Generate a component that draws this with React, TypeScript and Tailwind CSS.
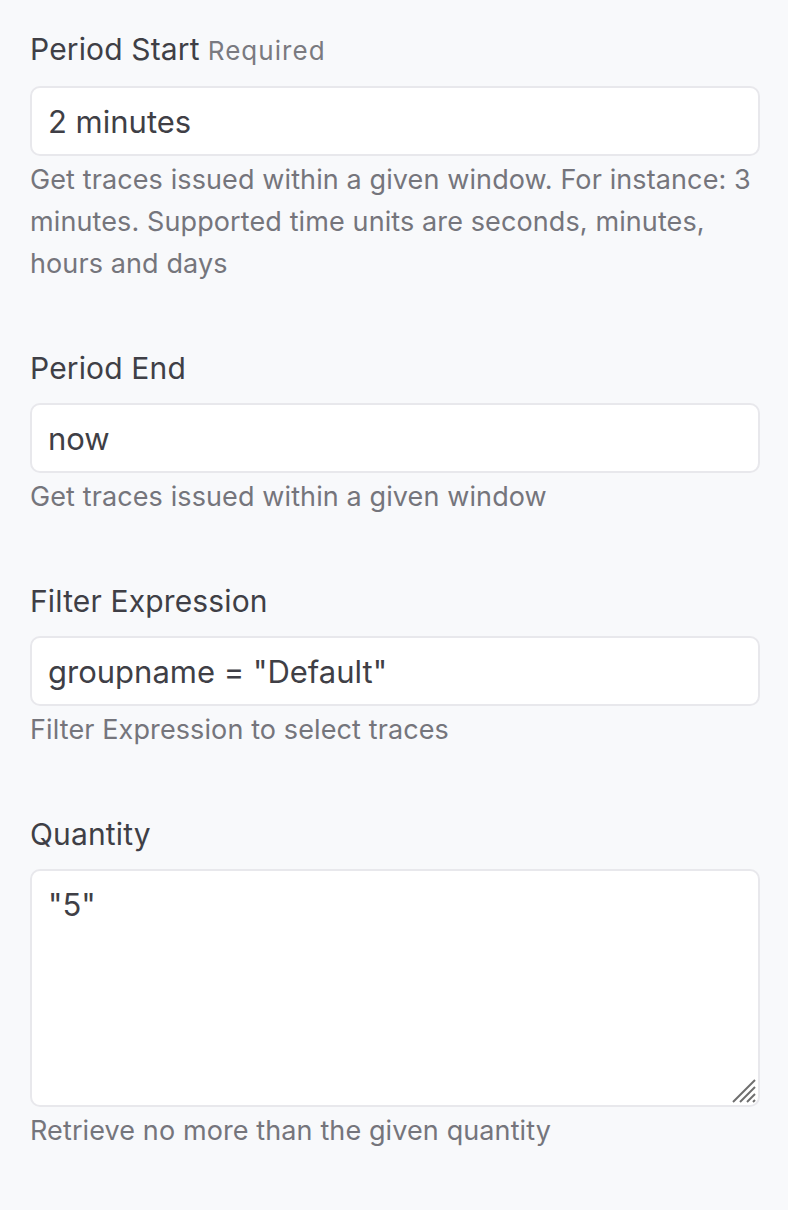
import { ReactNode } from 'react';

type FieldProps = {
  label: string;
  required?: boolean;
  help: string;
  children: ReactNode;
};

function Field({ label, required, help, children }: FieldProps) {
  return (
    <div className="flex flex-col">
      <label className="text-[30px] leading-[36px] text-[#3f3f46] mb-[17px] tracking-[0.005em]">
        {label}
        {required && <span className="ml-[8px] text-[26px] tracking-[0.04em] text-[#7a7a80]">Required</span>}
      </label>
      {children}
      <p className="mt-[3px] text-[27px] leading-[42px] tracking-[0.004em] text-[#75757c]">{help}</p>
    </div>
  );
}

const inputCls =
  'w-full h-[70px] px-[16px] rounded-[10px] border-2 border-[#e8e8ec] bg-white text-[31px] text-[#3f3f46] outline-none';

function Grip() {
  return (
    <svg
      className="absolute right-[4px] bottom-[4px] pointer-events-none"
      width="24"
      height="24"
      viewBox="0 0 24 24"
    >
      <g stroke="#6e6e6e" strokeWidth="2">
        <line x1="1" y1="23" x2="23" y2="1" />
        <line x1="8" y1="23" x2="23" y2="8" />
        <line x1="15" y1="23" x2="23" y2="15" />
        <line x1="21" y1="23" x2="23" y2="21" />
      </g>
    </svg>
  );
}

export default function App() {
  return (
    <div
      className="min-h-screen bg-[#f8f9fb] pl-[30px] pr-[28px] pt-[31px] flex flex-col gap-[65px]"
      style={{ fontFamily: 'Inter, "Liberation Sans", sans-serif' }}
    >
      <Field
        label="Period Start"
        required
        help="Get traces issued within a given window. For instance: 3 minutes. Supported time units are seconds, minutes, hours and days"
      >
        <input className={inputCls} defaultValue="2 minutes" />
      </Field>
      <Field label="Period End" help="Get traces issued within a given window">
        <input className={inputCls} defaultValue="now" />
      </Field>
      <Field label="Filter Expression" help="Filter Expression to select traces">
        <input className={inputCls} defaultValue={'groupname = "Default"'} />
      </Field>
      <Field label="Quantity" help="Retrieve no more than the given quantity">
        <div className="relative">
          <textarea
            className="w-full h-[238px] px-[16px] py-[16px] rounded-[10px] border-2 border-[#e8e8ec] bg-white text-[31px] leading-[36px] text-[#3f3f46] outline-none block resize-none"
            defaultValue={'"5"'}
          />
          <Grip />
        </div>
      </Field>
    </div>
  );
}
